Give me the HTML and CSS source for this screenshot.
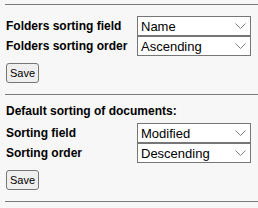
FILE: index.html
```html
<!DOCTYPE html>
<html lang="en">
<head>
  <meta charset="UTF-8" />
  <title>Sorting settings</title>
  <link rel="stylesheet" href="styles.css">
</head>
<body>

<hr class="divider">

<form class="settings">
  <div class="field-grid">
    <label class="field-label">Folders sorting field</label>
    <div class="select-box">
      <select><option>Name</option></select>
      <svg class="chevron" viewBox="0 0 11 6"><path d="M0.5 0.5 L5.5 5.5 L10.5 0.5" /></svg>
    </div>
    <label class="field-label">Folders sorting order</label>
    <div class="select-box">
      <select><option>Ascending</option></select>
      <svg class="chevron" viewBox="0 0 11 6"><path d="M0.5 0.5 L5.5 5.5 L10.5 0.5" /></svg>
    </div>
  </div>
  <button type="button" class="save-btn">Save</button>
</form>

<hr class="divider">

<form class="settings">
  <div class="section-title">Default sorting of documents:</div>
  <div class="field-grid">
    <label class="field-label">Sorting field</label>
    <div class="select-box">
      <select><option>Modified</option></select>
      <svg class="chevron" viewBox="0 0 11 6"><path d="M0.5 0.5 L5.5 5.5 L10.5 0.5" /></svg>
    </div>
    <label class="field-label">Sorting order</label>
    <div class="select-box">
      <select><option>Descending</option></select>
      <svg class="chevron" viewBox="0 0 11 6"><path d="M0.5 0.5 L5.5 5.5 L10.5 0.5" /></svg>
    </div>
  </div>
  <button type="button" class="save-btn">Save</button>
</form>

<hr class="divider">

</body>
</html>
```

FILE: styles.css
```css
* {
  box-sizing: border-box;
}

body {
  margin: 0;
  padding: 4px 0 0 5px;
  background: #f7f7f7;
  font-family: "Liberation Sans", Arial, sans-serif;
  color: #000;
}

.divider {
  margin: 0;
  border: none;
  border-top: 1px solid #7a7a7a;
  height: 0;
}

.settings {
  display: flex;
  flex-direction: column;
  align-items: flex-start;
  padding: 11px 0 11px 1px;
}

.section-title {
  font-size: 12px;
  font-weight: bold;
  line-height: 14px;
  margin: -2px 0 5px;
}

.field-grid {
  display: grid;
  grid-template-columns: 131px 114px;
  grid-auto-rows: 20px;
  align-items: center;
}

.field-label {
  font-size: 12px;
  font-weight: bold;
  line-height: 14px;
}

.select-box {
  position: relative;
  height: 20px;
}

.select-box select {
  appearance: none;
  -webkit-appearance: none;
  width: 100%;
  height: 20px;
  margin: 0;
  padding: 0 20px 0 3px;
  background: #fff;
  border: 1px solid #767676;
  border-radius: 0;
  font-family: "Liberation Sans", Arial, sans-serif;
  font-size: 13px;
  color: #000;
}

.chevron {
  position: absolute;
  right: 5px;
  top: 7px;
  width: 11px;
  height: 6px;
  fill: none;
  stroke: #808080;
  stroke-width: 1;
}

.save-btn {
  margin-top: 7px;
  height: 20px;
  padding: 0 3px;
  background: #efefef;
  border: 1px solid #767676;
  border-radius: 3px;
  font-family: "Liberation Sans", Arial, sans-serif;
  font-size: 11px;
  color: #000;
}
```
